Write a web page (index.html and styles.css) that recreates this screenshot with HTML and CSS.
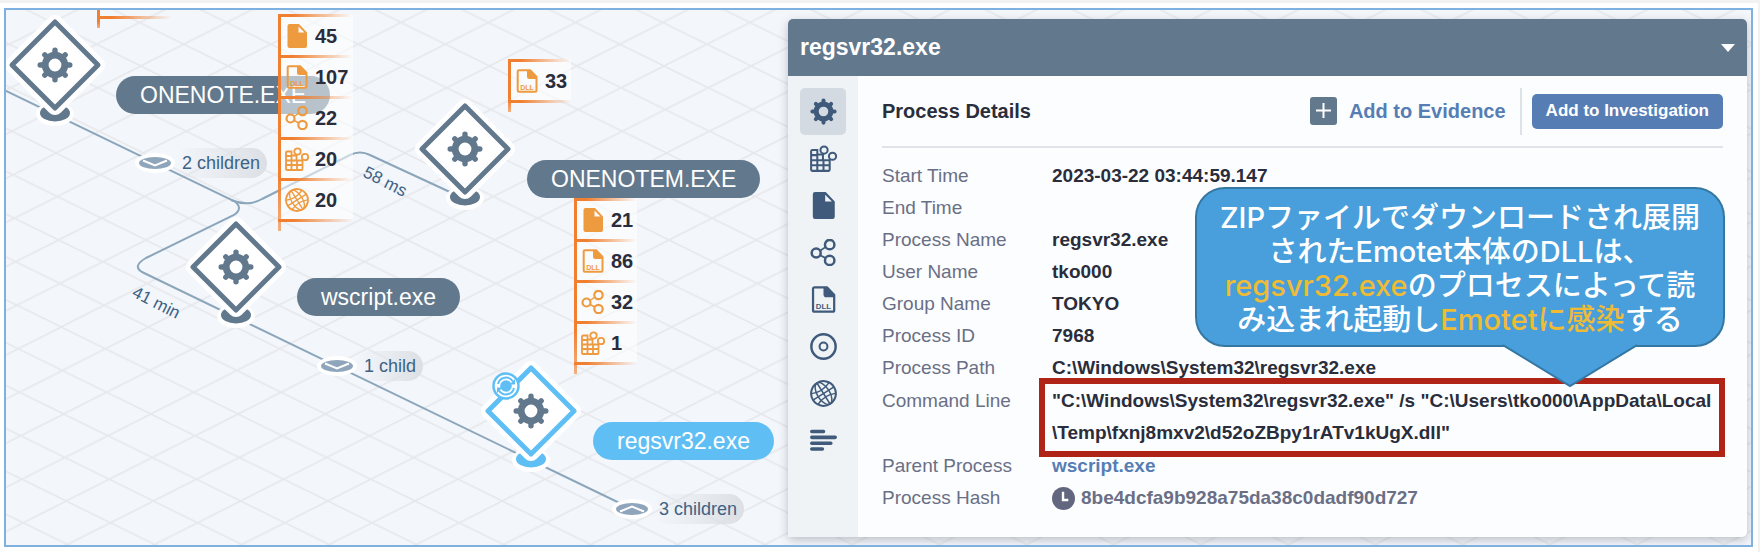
FILE: index.html
```html
<!DOCTYPE html>
<html lang="ja">
  <head>
    <meta charset="UTF-8" />
    <meta name="viewport" content="width=device-width, initial-scale=1.0" />
    <title>Process Tree - regsvr32.exe</title>
    <link rel="stylesheet" href="styles.css">
  </head>
  <body>
    <!-- shared icons -->
    <svg class="sprite" aria-hidden="true">
      <symbol id="gear" viewBox="0 0 36 36">
        <g stroke="currentColor" fill="none">
          <circle cx="18" cy="18" r="9.8" stroke-width="6.8" />
          <path stroke-width="5.4" stroke-linecap="round" d="M18 3.2v5M18 27.8v5M3.2 18h5M27.8 18h5M7.8 7.8l3 3M25.2 25.2l3 3M7.8 28.2l3-3M25.2 10.8l3-3" />
        </g>
      </symbol>
      <symbol id="file" viewBox="0 0 24 24">
        <path fill="currentColor" d="M4.5 0H14l8 8.500V22a2 2 0 0 1-2 2H4.500a2 2 0 0 1-2-2V2a2 2 0 0 1 2-2zM13.500 2.500V8.500H19.500z" fill-rule="evenodd" />
      </symbol>
      <symbol id="dll" viewBox="0 0 24 24">
        <path fill="none" stroke="currentColor" stroke-width="2" d="M4 1.200h11L21.500 8v13.500a1.300 1.300 0 0 1-1.300 1.300H4a1.300 1.300 0 0 1-1.300-1.300v-19A1.300 1.300 0 0 1 4 1.200z" />
        <path fill="currentColor" d="M12 1h4l6 6.500v2.500h-7.500a2.500 2.500 0 0 1-2.500-2.500z" />
        <text x="12" y="20.500" text-anchor="middle" class="dll-text">DLL</text>
      </symbol>
      <symbol id="net" viewBox="0 0 24 24">
        <g fill="none" stroke="currentColor" stroke-width="2.200">
          <circle cx="5.500" cy="12.500" r="4" />
          <circle cx="17.500" cy="5" r="4.200" />
          <circle cx="17.500" cy="19" r="4.200" />
          <path stroke-width="1.500" d="M9 10.500l5-3.500M9 14.500l5 2.500" />
        </g>
      </symbol>
      <symbol id="blocks" viewBox="0 0 24 24">
        <g fill="none" stroke="currentColor" stroke-width="1.800">
          <path d="M2 4.500h4.500v4h5v5h6V22a1 1 0 0 1-1 1H2a1 1 0 0 1-1-1V5.500a1 1 0 0 1 1-1zM1 9h6M1 13.500h11M1 18h17M6.500 9v14M12 13.500V23" />
          <circle cx="12.500" cy="4.500" r="3.200" />
          <circle cx="20" cy="10" r="3.200" />
        </g>
      </symbol>
      <symbol id="disc" viewBox="0 0 24 24">
        <g fill="none" stroke="currentColor">
          <circle cx="12" cy="12" r="10.800" stroke-width="2.200" />
          <circle cx="12" cy="12" r="3.500" stroke-width="1.800" />
        </g>
      </symbol>
      <symbol id="globe" viewBox="0 0 24 24">
        <g fill="none" stroke="currentColor" stroke-width="1.300" transform="rotate(-32 12 12)">
          <circle cx="12" cy="12" r="11" stroke-width="1.800" />
          <ellipse cx="12" cy="12" rx="5.500" ry="11" />
          <path d="M12 1v22M1 12h22M3 6.500q9 4 18 0M3 17.500q9-4 18 0" />
        </g>
      </symbol>
      <symbol id="rows" viewBox="0 0 24 24">
        <path stroke="currentColor" stroke-width="3.200" stroke-linecap="round" d="M1.600 4H12M1.600 9.200H22.400M1.600 14.400H18.500M1.600 19.600H11" />
      </symbol>
      <symbol id="node" viewBox="0 0 116 128">
        <ellipse cx="58" cy="107" rx="19" ry="12" fill="#fff" />
        <ellipse cx="58" cy="106" rx="15" ry="8.500" fill="currentColor" />
        <path fill="#fff" stroke="#fff" stroke-width="16" stroke-linejoin="round" d="M58 16l42 42-42 42-42-42z" />
        <path fill="#fff" stroke="currentColor" stroke-width="5" stroke-linejoin="round" d="M58 15l43 43-43 43-43-43z" />
        <use href="#gear" x="40" y="40" width="36" height="36" color="#62788d" />
      </symbol>
      <symbol id="toggle" viewBox="0 0 40 20">
        <ellipse cx="20" cy="10" rx="20" ry="10" fill="#fff" />
        <ellipse cx="20" cy="10" rx="16" ry="6" fill="#8ea5bb" />
        <path fill="none" stroke="#fff" stroke-width="2" d="M8 7.500l12 5 12-5" />
      </symbol>
    </svg>

    <main class="workspace">
      <section class="graph">
        <svg class="graph-lines">
          <defs>
            <pattern id="grid" width="87.200" height="43.500" patternUnits="userSpaceOnUse" patternTransform="matrix(1 0 0.029 1 57.700 404)">
              <path d="M-4.360-2.175L91.560 45.675M-4.360 45.675L91.560-2.175" fill="none" stroke="#e6e8eb" stroke-width="1.600" />
            </pattern>
          </defs>
          <rect width="100%" height="100%" fill="url(#grid)" />
          <g fill="none" stroke="#8ba6bb" stroke-width="2">
            <path d="M0 81L228 191Q238 198 228 205L140 248Q126 256 136 262L626 499" />
            <path d="M225 190Q242 197 256 189L344 145Q354 140 364 145L459 189" />
          </g>
          <g class="edge-text">
            <text transform="translate(356 166) rotate(27)">58 ms</text>
            <text transform="translate(125 286) rotate(27)">41 min</text>
          </g>
        </svg>

        <svg class="node node-onenote"><use href="#node" /></svg>
        <svg class="node node-onenotem"><use href="#node" /></svg>
        <svg class="node node-wscript"><use href="#node" /></svg>
        <svg class="node node-regsvr"><use href="#node" /></svg>
        <svg class="sync" viewBox="0 0 28 28">
          <circle cx="14" cy="14" r="12.500" fill="#fff" stroke="#5fbff5" stroke-width="2.500" />
          <circle cx="14" cy="14" r="5.800" fill="#5fbff5" />
          <path fill="none" stroke="#5fbff5" stroke-width="2" d="M6 12a8.200 8.200 0 0 1 15-2.500M22 16a8.200 8.200 0 0 1-15 2.500" />
          <path fill="#5fbff5" d="M23 7v5.500h-5.500zM5 21v-5.500h5.500z" />
        </svg>

        <span class="pill pill-onenote">ONENOTE.EXE</span>
        <span class="pill pill-onenotem">ONENOTEM.EXE</span>
        <span class="pill pill-wscript">wscript.exe</span>
        <span class="pill pill-regsvr">regsvr32.exe</span>

        <div class="children children-onenote">
          <svg><use href="#toggle" /></svg><span>2 children</span>
        </div>
        <div class="children children-wscript">
          <svg><use href="#toggle" /></svg><span>1 child</span>
        </div>
        <div class="children children-regsvr">
          <svg class="flip"><use href="#toggle" /></svg><span>3 children</span>
        </div>

        <ul class="badges badges-top"></ul>
        <ul class="badges badges-onenote">
          <li><svg><use href="#file" /></svg>45</li>
          <li><svg><use href="#dll" /></svg>107</li>
          <li><svg><use href="#net" /></svg>22</li>
          <li><svg><use href="#blocks" /></svg>20</li>
          <li><svg><use href="#globe" /></svg>20</li>
        </ul>
        <ul class="badges badges-onenotem">
          <li><svg><use href="#dll" /></svg>33</li>
        </ul>
        <ul class="badges badges-regsvr">
          <li><svg><use href="#file" /></svg>21</li>
          <li><svg><use href="#dll" /></svg>86</li>
          <li><svg><use href="#net" /></svg>32</li>
          <li><svg><use href="#blocks" /></svg>1</li>
        </ul>
      </section>

      <section class="panel">
        <header class="panel-header">
          <h1>regsvr32.exe</h1>
          <button class="collapse" aria-label="Collapse"></button>
        </header>
        <div class="panel-body">
          <nav class="tabs">
            <button class="tab active" aria-label="Process"><svg><use href="#gear" /></svg></button>
            <button class="tab" aria-label="Registry"><svg><use href="#blocks" /></svg></button>
            <button class="tab" aria-label="Files"><svg><use href="#file" /></svg></button>
            <button class="tab" aria-label="Network"><svg><use href="#net" /></svg></button>
            <button class="tab" aria-label="DLL"><svg><use href="#dll" /></svg></button>
            <button class="tab" aria-label="Disk"><svg><use href="#disc" /></svg></button>
            <button class="tab" aria-label="DNS"><svg><use href="#globe" /></svg></button>
            <button class="tab" aria-label="Timeline"><svg><use href="#rows" /></svg></button>
          </nav>
          <div class="details">
            <div class="toolbar">
              <h2>Process Details</h2>
              <button class="evidence">
                <svg viewBox="0 0 27 28">
                  <rect width="27" height="28" rx="3" fill="#62788d" />
                  <path d="M13.500 6v15M6 13.500h15" stroke="#fff" stroke-width="2" />
                </svg>
                Add to Evidence
              </button>
              <div class="toolbar-end">
                <button class="investigate">Add to Investigation</button>
              </div>
            </div>
            <dl class="info">
              <dt>Start Time</dt>
              <dd>2023-03-22 03:44:59.147</dd>
              <dt>End Time</dt>
              <dd></dd>
              <dt>Process Name</dt>
              <dd>regsvr32.exe</dd>
              <dt>User Name</dt>
              <dd>tko000</dd>
              <dt>Group Name</dt>
              <dd>TOKYO</dd>
              <dt>Process ID</dt>
              <dd>7968</dd>
              <dt>Process Path</dt>
              <dd>C:\Windows\System32\regsvr32.exe</dd>
              <dt class="command">Command Line</dt>
              <dd class="command marked">"C:\Windows\System32\regsvr32.exe" /s "C:\Users\tko000\AppData\Local<wbr>\Temp\fxnj8mxv2\d52oZBpy1rATv1kUgX.dll"</dd>
              <dt>Parent Process</dt>
              <dd><a href="#wscript">wscript.exe</a></dd>
              <dt>Process Hash</dt>
              <dd class="hash">
                <svg viewBox="0 0 24 24">
                  <circle cx="12" cy="12" r="12" fill="#62677f" />
                  <path d="M11.500 5v8.500H17" fill="none" stroke="#fff" stroke-width="2.500" />
                </svg>
                8be4dcfa9b928a75da38c0dadf90d727
              </dd>
            </dl>
          </div>
        </div>

        <!-- annotation -->
        <div class="callout">
          <p>
            ZIPファイルでダウンロードされ展開<br>
            されたEmotet本体のDLLは、<br>
            <em>regsvr32.exe</em>のプロセスによって読<br>
            み込まれ起動し<em>Emotetに感染</em>する
          </p>
          <svg class="callout-tail" viewBox="0 0 134 44">
            <path d="M0 0H134V2L67 42 0 2z" fill="#489fdb" />
            <path d="M0 1L67 42 134 1" fill="none" stroke="#3577a3" stroke-width="2" />
          </svg>
        </div>
      </section>
    </main>
  </body>
</html>
```

FILE: styles.css
```css
* {
  margin: 0;
  padding: 0;
  box-sizing: border-box;
}

body {
  font-family: "Liberation Sans", Arial, "Noto Sans CJK JP", sans-serif;
  font-size: 19px;
  color: #2a2d3b;
  background-color: #fff;
  border-top: 3px solid #f2f2f2;
  border-right: 2px solid #f2f2f2;
  padding: 5px 5px 5px 4px;
}

button {
  font-family: inherit;
  border: none;
  background: none;
  cursor: pointer;
}

.sprite {
  display: none;
}

.dll-text {
  font-size: 7px;
  font-weight: bold;
  fill: currentColor;
}

.workspace {
  position: relative;
  display: grid;
  grid-template-columns: 782px minmax(0, 1fr);
  padding: 9px 4px 8px 0;
  border: 2px solid #7fb1e0;
  background-color: #f3f6fb;
  overflow: hidden;
}

/* graph canvas, runs behind the panel */
.graph {
  position: absolute;
  inset: 0;
}

.graph-lines {
  width: 100%;
  height: 100%;
}

.edge-text {
  font-size: 17px;
  fill: #3c6285;
}

.node {
  position: absolute;
  width: 116px;
  height: 128px;
  color: #62788d;
}

.node-onenote {
  left: -9px;
  top: -3px;
}

.node-onenotem {
  left: 401px;
  top: 81px;
}

.node-wscript {
  left: 172px;
  top: 199px;
}

.node-regsvr {
  left: 467px;
  top: 343px;
  color: #5fbff5;
}

.sync {
  position: absolute;
  left: 486px;
  top: 362px;
  width: 28px;
  height: 28px;
}

.pill {
  position: absolute;
  padding: 0 24px;
  border-radius: 20px;
  font-size: 23px;
  line-height: 38px;
  color: #fff;
  background-color: #62788d;
}

.pill-onenote {
  left: 110px;
  top: 66px;
}

.pill-onenotem {
  left: 521px;
  top: 150px;
}

.pill-wscript {
  left: 291px;
  top: 268px;
}

.pill-regsvr {
  left: 587px;
  top: 412px;
  background-color: #5fbff5;
}

.children {
  position: absolute;
  display: flex;
  align-items: center;
  font-size: 18px;
  line-height: 30px;
  color: #3c6285;
}

.children svg {
  width: 40px;
  height: 20px;
}

.children .flip {
  transform: scaleY(-1);
}

.children span {
  padding: 0 7px;
  border-radius: 15px;
  background: linear-gradient(90deg, rgba(220, 224, 229, 0), #dce0e5);
}

.children-onenote {
  left: 129px;
  top: 138px;
}

.children-wscript {
  left: 311px;
  top: 341px;
}

.children-regsvr {
  left: 606px;
  top: 484px;
}

.badges {
  position: absolute;
  width: 75px;
  padding-bottom: 3px;
  list-style: none;
  background: linear-gradient(90deg, #f08030 20%, transparent) bottom / 100% 3px no-repeat;
}

.badges::before {
  content: "";
  position: absolute;
  left: 0;
  top: 0;
  bottom: -9px;
  width: 3px;
  background: linear-gradient(#f08030 75%, rgba(240, 128, 48, 0.6));
}

.badges li {
  display: flex;
  align-items: center;
  gap: 6px;
  height: 41px;
  padding: 3px 0 0 7px;
  font-size: 20px;
  font-weight: bold;
  background: linear-gradient(90deg, #f08030 20%, transparent) top / 100% 3px no-repeat,
    rgba(255, 255, 255, 0.55);
}

.badges svg {
  width: 24px;
  height: 24px;
  color: #ee9a3e;
}

.badges-top {
  left: 91px;
  top: -6px;
  height: 15px;
}

.badges-onenote {
  left: 272px;
  top: 4px;
}

.badges-onenotem {
  left: 502px;
  top: 49px;
  width: 63px;
}

.badges-regsvr {
  left: 568px;
  top: 188px;
  width: 63px;
}

/* process panel */
.panel {
  position: relative;
  grid-column: 2;
  border-radius: 5px;
  background-color: #fcfdfe;
  box-shadow: 0 3px 10px rgba(60, 70, 80, 0.3);
}

.panel-header {
  display: flex;
  align-items: center;
  justify-content: space-between;
  height: 57px;
  padding: 0 12px;
  border-radius: 5px 5px 0 0;
  background-color: #62788d;
}

.panel-header h1 {
  font-size: 23px;
  color: #fff;
}

.collapse {
  border: 7px solid transparent;
  border-top: 8px solid #fff;
  border-bottom: 0;
}

.panel-body {
  display: flex;
}

.tabs {
  display: flex;
  flex-direction: column;
  padding: 12px;
  background-color: #eff3f6;
}

.tab {
  display: flex;
  align-items: center;
  justify-content: center;
  width: 46px;
  height: 47px;
  border-radius: 5px;
  color: #3f5a7a;
}

.tab.active {
  background-color: #d3dae1;
}

.tab svg {
  width: 27px;
  height: 27px;
}

.details {
  flex: 1;
  min-width: 0;
  padding: 0 24px 23px;
}

.toolbar {
  display: flex;
  align-items: center;
  height: 72px;
  border-bottom: 2px solid #e0e3ea;
}

.toolbar h2 {
  flex: 1;
  font-size: 20px;
}

.evidence {
  display: flex;
  align-items: center;
  gap: 12px;
  font-size: 20px;
  font-weight: bold;
  color: #567db4;
}

.evidence svg {
  width: 27px;
  height: 28px;
}

.toolbar-end {
  display: flex;
  align-items: center;
  height: 47px;
  margin-left: 14px;
  padding-left: 10px;
  border-left: 2px solid #dde2e9;
}

.investigate {
  height: 35px;
  padding: 0 14px;
  border-radius: 5px;
  font-size: 17px;
  font-weight: bold;
  color: #fff;
  background-color: #567db4;
}

.info {
  display: grid;
  grid-template-columns: 170px minmax(0, 1fr);
  grid-auto-rows: minmax(32px, auto);
  padding-top: 12px;
  line-height: 32px;
}

.info dt {
  color: #6a6f85;
}

.info dd {
  font-weight: bold;
}

.info a {
  color: #567db4;
  text-decoration: none;
}

.info .command {
  padding: 1px 0;
}

.marked {
  position: relative;
}

.marked::after {
  content: "";
  position: absolute;
  inset: -6px -2px -7px -13px;
  border: 6px solid #b02418;
}

.info .hash {
  display: flex;
  align-items: center;
  gap: 6px;
  color: #6a6f85;
}

.hash svg {
  width: 23px;
  height: 23px;
}

/* speech bubble over the details */
.callout {
  position: absolute;
  right: 22px;
  top: 168px;
  width: 530px;
  padding: 12px 0 8px;
  border: 2px solid #3577a3;
  border-radius: 30px;
  color: #fff;
  background-color: #489fdb;
}

.callout p {
  font-family: Inter, "Noto Sans CJK JP", sans-serif;
  font-size: 29px;
  font-weight: 500;
  line-height: 34px;
  text-align: center;
}

.callout em {
  font-style: normal;
  color: #efbb35;
}

.callout-tail {
  position: absolute;
  left: 306px;
  top: 100%;
  width: 134px;
  height: 44px;
  margin-top: -1px;
}
```
